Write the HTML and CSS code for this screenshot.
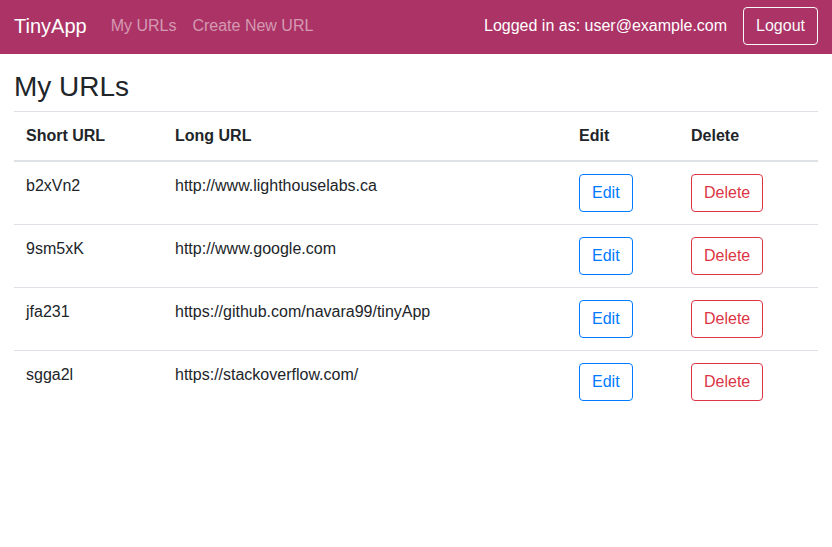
FILE: index.html
```html
<!DOCTYPE html>
<html lang="en">
<head>
<meta charset="utf-8">
<title>TinyApp</title>
<link rel="stylesheet" href="styles.css">
</head>
<body>
<nav class="navbar">
  <div class="nav-left">
    <a class="brand" href="#">TinyApp</a>
    <a class="nav-link" href="#">My URLs</a>
    <a class="nav-link" href="#">Create New URL</a>
  </div>
  <div class="nav-right">
    <span class="nav-text">Logged in as: user@example.com</span>
    <button class="btn btn-light">Logout</button>
  </div>
</nav>
<main class="content">
  <h3 class="title">My URLs</h3>
  <table class="table">
    <thead>
      <tr>
        <th class="c1">Short URL</th>
        <th class="c2">Long URL</th>
        <th class="c3">Edit</th>
        <th class="c4">Delete</th>
      </tr>
    </thead>
    <tbody>
      <tr>
        <td>b2xVn2</td>
        <td>http://www.lighthouselabs.ca</td>
        <td><button class="btn btn-primary">Edit</button></td>
        <td><button class="btn btn-danger">Delete</button></td>
      </tr>
      <tr>
        <td>9sm5xK</td>
        <td>http://www.google.com</td>
        <td><button class="btn btn-primary">Edit</button></td>
        <td><button class="btn btn-danger">Delete</button></td>
      </tr>
      <tr>
        <td>jfa231</td>
        <td>https://github.com/navara99/tinyApp</td>
        <td><button class="btn btn-primary">Edit</button></td>
        <td><button class="btn btn-danger">Delete</button></td>
      </tr>
      <tr>
        <td>sgga2l</td>
        <td>https://stackoverflow.com/</td>
        <td><button class="btn btn-primary">Edit</button></td>
        <td><button class="btn btn-danger">Delete</button></td>
      </tr>
    </tbody>
  </table>
</main>
</body>
</html>
```
FILE: styles.css
```css
* { box-sizing: border-box; }
html, body {
  margin: 0;
  padding: 0;
  background: #fff;
  color: #212529;
  font-family: "Liberation Sans", Arial, sans-serif;
  font-size: 16px;
  line-height: 1.5;
}
.navbar {
  height: 54px;
  background: #ab3366;
  display: flex;
  align-items: center;
  justify-content: space-between;
  padding: 0 14px 2px;
}
.nav-left, .nav-right {
  display: flex;
  align-items: center;
}
.brand {
  color: #fff;
  font-size: 20px;
  line-height: 30px;
  text-decoration: none;
  margin-right: 16px;
}
.nav-link {
  color: rgba(255, 255, 255, 0.5);
  text-decoration: none;
  padding: 8px;
}
.nav-text {
  color: #fff;
  margin-right: 16px;
}
.btn {
  font-family: inherit;
  font-size: 16px;
  line-height: 24px;
  padding: 6px 12px;
  border: 1px solid;
  border-radius: 4px;
  background: transparent;
  cursor: pointer;
}
.btn-light { color: #f8f9fa; border-color: #f8f9fa; }
.btn-primary { color: #007bff; border-color: #007bff; }
.btn-danger { color: #dc3545; border-color: #dc3545; }
.content {
  padding: 16px 14px 0;
}
.title {
  font-size: 28px;
  font-weight: 500;
  line-height: 1.2;
  margin: 0 0 7px;
}
.table {
  width: 100%;
  border-collapse: collapse;
  table-layout: fixed;
}
.table th, .table td {
  padding: 12px;
  text-align: left;
  vertical-align: top;
  border-top: 1px solid #dee2e6;
}
.table th { font-weight: bold; }
.table thead th { border-bottom: 2px solid #dee2e6; }
.c1 { width: 149px; }
.c2 { width: 404px; }
.c3 { width: 112px; }
.c4 { width: 139px; }
```
